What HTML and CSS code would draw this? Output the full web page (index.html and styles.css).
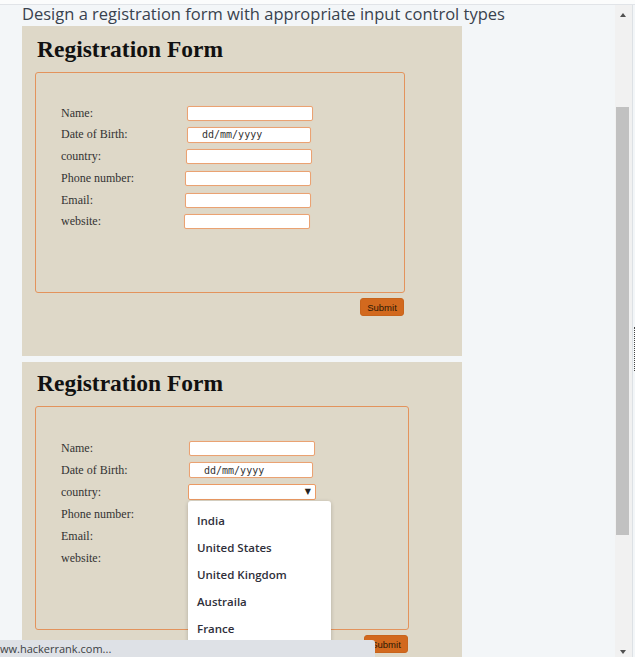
FILE: index.html
```html
<!DOCTYPE html>
<html lang="en">
<head>
  <meta charset="UTF-8" />
  <title>Registration Form</title>
  <link rel="stylesheet" href="styles.css">
</head>
<body>
  <div class="topline"></div>

  <main class="page">
    <p class="task">Design a registration form with appropriate input control types</p>

    <section class="demo">
      <h2>Registration Form</h2>
      <form class="reg">
        <div class="row"><label>Name:</label><input class="field" type="text"></div>
        <div class="row"><label>Date of Birth:</label><input class="field date" type="text" value="dd/mm/yyyy"></div>
        <div class="row"><label>country:</label><input class="field shift1" type="text"></div>
        <div class="row"><label>Phone number:</label><input class="field shift2" type="text"></div>
        <div class="row"><label>Email:</label><input class="field shift2" type="text"></div>
        <div class="row"><label>website:</label><input class="field shift3" type="text"></div>
      </form>
      <div class="actions"><button class="submit" type="button">Submit</button></div>
    </section>

    <section class="demo demo-open">
      <h2>Registration Form</h2>
      <form class="reg wide">
        <div class="row"><label>Name:</label><input class="field" type="text"></div>
        <div class="row"><label>Date of Birth:</label><input class="field date" type="text" value="dd/mm/yyyy"></div>
        <div class="row"><label>country:</label>
          <div class="select">
            <span class="caret">&#9660;</span>
            <ul class="options">
              <li>India</li>
              <li>United States</li>
              <li>United Kingdom</li>
              <li>Austraila</li>
              <li>France</li>
            </ul>
          </div>
        </div>
        <div class="row"><label>Phone number:</label><input class="field shift1" type="text"></div>
        <div class="row"><label>Email:</label><input class="field shift1" type="text"></div>
        <div class="row"><label>website:</label><input class="field shift1" type="text"></div>
      </form>
      <div class="actions"><button class="submit" type="button">Submit</button></div>
    </section>
  </main>

  <div class="scrollbar">
    <span class="arrow up"></span>
    <span class="thumb"></span>
    <span class="arrow down"></span>
  </div>
  <div class="edge"><span class="dots"></span></div>

  <div class="status">ww.hackerrank.com...</div>
</body>
</html>
```

FILE: styles.css
```css
* {
  margin: 0;
  padding: 0;
  box-sizing: border-box;
}
html, body {
  height: 100%;
  overflow: hidden;
}
body {
  background: #f3f6f8;
  font-family: "Liberation Serif", serif;
  color: #333;
}
.topline {
  height: 5px;
  background: #fbfcfc;
  border-bottom: 1px solid #e1e4e8;
}
.page {
  padding-left: 22px;
}
.task {
  font-family: "Open Sans", sans-serif;
  font-size: 16.5px;
  line-height: 18px;
  color: #39424e;
}

/* demo panels */
.demo {
  width: 440px;
  margin-top: 3px;
  background: #ded8c8;
  padding: 9px 0 40px 13px;
}
.demo + .demo {
  margin-top: 6px;
}
.demo-open {
  padding-top: 7px;
}
.demo h2 {
  font-size: 23.5px;
  line-height: 28px;
  font-weight: bold;
  color: #111;
  margin: 0 0 9px 2px;
}
.reg {
  width: 370px;
  height: 221px;
  border: 1px solid #e3935c;
  border-radius: 3px;
  padding: 32px 0 0 25px;
  display: flex;
  flex-direction: column;
  gap: 5.8px;
}
.reg.wide {
  width: 374px;
  height: 224px;
  padding-top: 33px;
  gap: 6px;
}
.row {
  display: grid;
  grid-template-columns: 126px 1fr;
  align-items: center;
  height: 16px;
}
.row label {
  font-size: 12px;
}
.field {
  width: 126px;
  height: 15px;
  border: 1px solid #eaa272;
  border-radius: 2px;
  background: #fff;
  box-shadow: 0 0 1px #f2c4a4;
  outline: none;
}
.field.date {
  height: 16px;
  width: 124px;
  padding-left: 14px;
  font-family: "DejaVu Sans Mono", monospace;
  font-size: 10px;
  color: #333;
}
.shift1 { margin-left: -1px; }
.shift2 { margin-left: -2px; width: 126px; }
.shift3 { margin-left: -3px; }
.wide .row { grid-template-columns: 128px 1fr; }

/* open select */
.select {
  position: relative;
  margin-left: -1px;
  width: 128px;
  height: 16px;
  border: 1px solid #eb9a64;
  border-radius: 2px;
  background: #fff;
}
.caret {
  position: absolute;
  right: 4px;
  top: 1px;
  font-size: 8px;
  line-height: 12px;
  color: #222;
  font-family: "DejaVu Sans", sans-serif;
}
.options {
  position: absolute;
  left: -1px;
  top: 16px;
  width: 143px;
  height: 160px;
  list-style: none;
  background: #fff;
  border-radius: 3px;
  box-shadow: 0 1px 4px rgba(0, 0, 0, 0.2);
  padding: 6px 0 0 9px;
  z-index: 5;
}
.options li {
  font-family: "Open Sans", sans-serif;
  font-weight: 600;
  font-size: 11.5px;
  line-height: 27px;
  color: #2f2f3a;
}

.actions {
  width: 370px;
  display: flex;
  justify-content: flex-end;
  padding: 5px 1px 0 0;
}
.wide + .actions {
  width: 374px;
}
.submit {
  width: 44px;
  height: 18px;
  background: #d2691e;
  border: 1px solid #c8641c;
  border-radius: 3px;
  font-family: "Liberation Sans", sans-serif;
  font-size: 9.5px;
  color: #2e1804;
}

/* fake browser chrome */
.scrollbar {
  position: fixed;
  left: 615px;
  top: 5px;
  width: 17px;
  bottom: 0;
  background: #f1f1f1;
}
.thumb {
  position: absolute;
  left: 1px;
  top: 102px;
  width: 13px;
  height: 428px;
  background: #c1c1c1;
}
.arrow {
  position: absolute;
  left: 5px;
  width: 0;
  height: 0;
  border-left: 3.5px solid transparent;
  border-right: 3.5px solid transparent;
}
.arrow.up {
  top: 8px;
  border-bottom: 4px solid #505050;
}
.arrow.down {
  bottom: 3px;
  border-top: 4px solid #505050;
}
.edge {
  position: fixed;
  left: 632px;
  top: 5px;
  bottom: 0;
  width: 3px;
  border-left: 1px solid #dde1e5;
}
.dots {
  position: absolute;
  left: 1px;
  top: 322px;
  height: 44px;
  border-left: 1px dotted #444;
}
.status {
  position: fixed;
  left: 0;
  bottom: 0;
  width: 375px;
  height: 17px;
  background: #dee1e6;
  border-top-right-radius: 3px;
  font-family: "Open Sans", sans-serif;
  font-size: 11px;
  line-height: 17px;
  color: #3c4043;
  z-index: 10;
}
```
